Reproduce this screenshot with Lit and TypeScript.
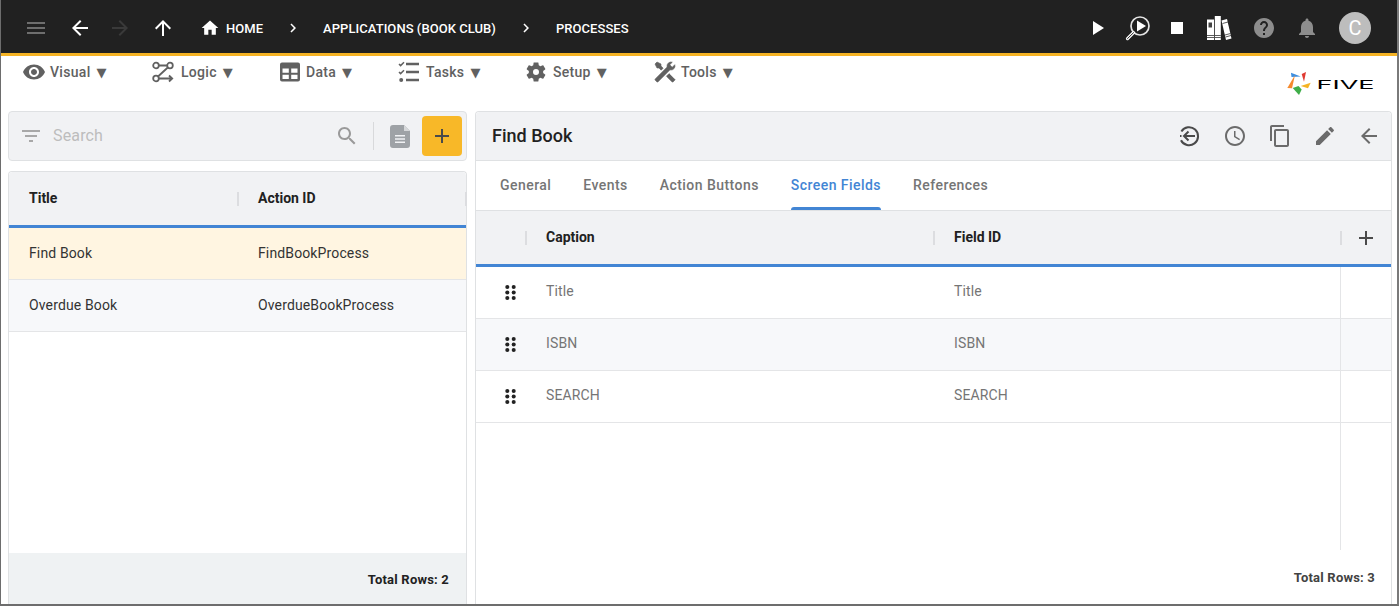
import { LitElement, html, css, svg } from 'lit';
import { customElement } from 'lit/decorators.js';

const P = {
  menu: 'M3 18h18v-2H3v2zm0-5h18v-2H3v2zm0-7v2h18V6H3z',
  back: 'M20 11H7.83l5.59-5.59L12 4l-8 8 8 8 1.41-1.41L7.83 13H20v-2z',
  forward: 'M12 4l-1.41 1.41L16.17 11H4v2h12.17l-5.58 5.59L12 20l8-8z',
  up: 'M4 12l1.41 1.41L11 7.83V20h2V7.83l5.58 5.59L20 12l-8-8-8 8z',
  home: 'M10 20v-6h4v6h5v-8h3L12 3 2 12h3v8z',
  chevron: 'M10 6L8.59 7.41 13.17 12l-4.58 4.59L10 18l6-6z',
  play: 'M8 5v14l11-7z',
  stop: 'M6 6h12v12H6z',
  help: 'M12 2C6.48 2 2 6.48 2 12s4.48 10 10 10 10-4.48 10-10S17.52 2 12 2zm1 17h-2v-2h2v2zm2.07-7.75l-.9.92C13.45 12.9 13 13.5 13 15h-2v-.5c0-1.1.45-2.1 1.17-2.83l1.24-1.26c.37-.36.59-.86.59-1.41 0-1.1-.9-2-2-2s-2 .9-2 2H8c0-2.21 1.79-4 4-4s4 1.79 4 4c0 .88-.36 1.68-.93 2.25z',
  bell: 'M12 22c1.1 0 2-.9 2-2h-4c0 1.1.89 2 2 2zm6-6v-5c0-3.07-1.64-5.64-4.5-6.32V4c0-.83-.67-1.5-1.5-1.5s-1.5.67-1.5 1.5v.68C7.63 5.36 6 7.92 6 11v5l-2 2v1h16v-1l-2-2z',
  eye: 'M12 4.5C7 4.5 2.73 7.61 1 12c1.73 4.39 6 7.5 11 7.5s9.27-3.11 11-7.5c-1.73-4.39-6-7.5-11-7.5zM12 17c-2.76 0-5-2.24-5-5s2.24-5 5-5 5 2.24 5 5-2.24 5-5 5zm0-8c-1.66 0-3 1.34-3 3s1.34 3 3 3 3-1.34 3-3-1.34-3-3-3z',
  gear: 'M19.14 12.94c.04-.3.06-.61.06-.94 0-.32-.02-.64-.07-.94l2.03-1.58c.18-.14.23-.41.12-.61l-1.92-3.32c-.12-.22-.37-.29-.59-.22l-2.39.96c-.5-.38-1.03-.7-1.62-.94l-.36-2.54c-.04-.24-.24-.41-.48-.41h-3.84c-.24 0-.43.17-.47.41l-.36 2.54c-.59.24-1.13.57-1.62.94l-2.39-.96c-.22-.08-.47 0-.59.22L2.74 8.87c-.12.21-.08.47.12.61l2.03 1.58c-.05.3-.09.63-.09.94s.02.64.07.94l-2.03 1.58c-.18.14-.23.41-.12.61l1.92 3.32c.12.22.37.29.59.22l2.39-.96c.5.38 1.03.7 1.62.94l.36 2.54c.05.24.24.41.48.41h3.84c.24 0 .44-.17.47-.41l.36-2.54c.59-.24 1.13-.56 1.62-.94l2.39.96c.22.08.47 0 .59-.22l1.92-3.32c.12-.22.07-.47-.12-.61l-2.01-1.58zM12 15a3 3 0 1 1 0-6 3 3 0 0 1 0 6z',
  tools: 'M21.71 20.29L20.29 21.71A1 1 0 0 1 18.88 21.71L7 9.85A3.81 3.81 0 0 1 6 10A4 4 0 0 1 2.22 4.7L4.76 7.24L5.29 6.71L6.71 5.29L7.24 4.76L4.7 2.22A4 4 0 0 1 10 6A3.81 3.81 0 0 1 9.85 7L21.71 18.88A1 1 0 0 1 21.71 20.29M2.29 18.88A1 1 0 0 0 2.29 20.29L3.71 21.71A1 1 0 0 0 5.12 21.71L10.59 16.25L7.76 13.42M20 2L16 4V6L13.83 8.17L15.83 10.17L18 8H20L22 4Z',
  filter: 'M10 18h4v-2h-4v2zM3 6v2h18V6H3zm3 7h12v-2H6v2z',
  search: 'M15.5 14h-.79l-.28-.27C15.41 12.59 16 11.11 16 9.5 16 5.91 13.09 3 9.5 3S3 5.91 3 9.5 5.91 16 9.5 16c1.61 0 3.09-.59 4.23-1.57l.27.28v.79l5 4.99L20.49 19l-4.99-5zm-6 0C7.01 14 5 11.99 5 9.5S7.01 5 9.5 5 14 7.01 14 9.5 11.99 14 9.5 14z',
  plus: 'M19 13h-6v6h-2v-6H5v-2h6V5h2v6h6v2z',
  clock: 'M11.99 2C6.47 2 2 6.48 2 12s4.47 10 9.99 10C17.52 22 22 17.52 22 12S17.52 2 11.99 2zM12 20c-4.42 0-8-3.58-8-8s3.58-8 8-8 8 3.58 8 8-3.58 8-8 8zm.5-13H11v6l5.25 3.15.75-1.23-4.5-2.67z',
  copy: 'M16 1H4c-1.1 0-2 .9-2 2v14h2V3h12V1zm3 4H8c-1.1 0-2 .9-2 2v14c0 1.1.9 2 2 2h11c1.1 0 2-.9 2-2V7c0-1.1-.9-2-2-2zm0 16H8V7h11v14z',
  edit: 'M3 17.25V21h3.75L17.81 9.94l-3.75-3.75L3 17.25zM20.71 7.04c.39-.39.39-1.02 0-1.41l-2.34-2.34c-.39-.39-1.02-.39-1.41 0l-1.83 1.83 3.75 3.75 1.83-1.83z',
};

const icon = (d: string, size = 24) =>
  html`<svg class="ic" width=${size} height=${size} viewBox="0 0 24 24" aria-hidden="true"><path d=${d} fill="currentColor"></path></svg>`;

const logicIcon = html`<svg class="ic" width="22" height="22" viewBox="0 0 22 22" fill="none" stroke="currentColor" stroke-width="1.800" aria-hidden="true">
  <circle cx="4" cy="4.500" r="2.800"></circle>
  <circle cx="18" cy="4.500" r="2.800"></circle>
  <circle cx="4" cy="17.500" r="2.800"></circle>
  <path d="M7 4.500h8M15.800 6.500 6 15.500M7 17.500h13M17 14.500l3.200 3-3.200 3"></path>
</svg>`;

const tableIcon = html`<svg class="ic" width="22" height="22" viewBox="0 0 22 22" aria-hidden="true">
  <path fill="currentColor" fill-rule="evenodd" d="M3 1.500h16a2 2 0 0 1 2 2v15a2 2 0 0 1-2 2H3a2 2 0 0 1-2-2v-15a2 2 0 0 1 2-2zM3.500 7.500v4.200h6.300V7.500zm8.700 0v4.200h6.300V7.500zM3.500 13.700v4.300h6.300v-4.300zm8.700 0v4.300h6.300v-4.300z"></path>
</svg>`;

const tasksIcon = html`<svg class="ic" width="22" height="22" viewBox="0 0 22 22" aria-hidden="true">
  <path d="M8 3h13M8 11h13M8 19h13" stroke="currentColor" stroke-width="2.300" fill="none"></path>
  <path d="M1 3l1.600 1.600L6 1.300M1 11l1.600 1.600L6 9.300" stroke="currentColor" stroke-width="1.500" fill="none"></path>
  <circle cx="3.200" cy="19" r="2" fill="currentColor"></circle>
</svg>`;

const toolsIcon = html`<svg class="ic" width="24" height="24" viewBox="0 0 24 24" aria-hidden="true">
  <path d=${P.tools} fill="currentColor" stroke="currentColor" stroke-width=".6" transform="translate(24 0) scale(-1 1)"></path>
</svg>`;

const docIcon = html`<svg class="ic" width="20" height="23" viewBox="0 0 20 23" aria-hidden="true">
  <path fill="currentColor" fill-rule="evenodd" d="M3 0h11l6 6v14a3 3 0 0 1-3 3H3a3 3 0 0 1-3-3V3a3 3 0 0 1 3-3zM5 10v1.500h10V10zm0 3.200v1.500h10v-1.500zm0 3.200v1.500h10v-1.500z"></path>
  <path d="M14 0v6h6z" fill="#d6d8da"></path>
</svg>`;

const magnifyPlay = html`<svg class="ic" width="26" height="26" viewBox="0 0 26 26" fill="none" aria-hidden="true">
  <circle cx="15" cy="11" r="9" stroke="#e4e4e4" stroke-width="1.700"></circle>
  <path d="M12 5.500l9 5.500-9 5.500z" fill="#fff"></path>
  <path d="M8.500 17.700 2.500 23.600" stroke="#fff" stroke-width="3.200" stroke-linecap="round"></path>
  <path d="M8.500 17.700 2.500 23.600" stroke="#212121" stroke-width="1" stroke-linecap="round"></path>
</svg>`;

const books = html`<svg class="ic" width="26" height="26" viewBox="0 0 26 26" aria-hidden="true">
  <path d="M1 4.500h7v20.500H1zM8.800 1h6v24h-6z" fill="#fff"></path>
  <path d="M15.500 5.500 21 4l4.500 19.500-5.500 1.500z" fill="#fff"></path>
  <path d="M2.500 7.500h3.500v5H2.500z" fill="#444"></path>
  <path d="M1 20.500h7M1 22.500h7M8.800 20.500h6M8.800 22.500h6M19 20l5.500-1.500M19.500 22l5.500-1.500M16.500 8.500l5.500-1.500" stroke="#333" stroke-width=".8"></path>
</svg>`;

const historyBack = html`<svg class="ic" width="24" height="24" viewBox="0 0 24 24" fill="none" stroke="currentColor" stroke-width="2" aria-hidden="true">
  <path d="M4.400 7.500A9 9 0 1 1 4 16.200"></path>
  <path d="M18 12H7M11.500 7.500 7 12l4.500 4.500"></path>
  <path d="M3 12h1.500"></path>
</svg>`;

const grip = html`<svg class="ic" width="11" height="17" viewBox="0 0 12 18" aria-hidden="true">
  ${[3, 9, 15].map((y) => svg`<circle cx="2.500" cy=${y} r="2.200" fill="#222"></circle><circle cx="9.500" cy=${y} r="2.200" fill="#222"></circle>`)}
</svg>`;

const logo = html`<svg class="logo" width="88" height="26" viewBox="0 0 88 26" role="img" aria-label="FIVE">
  <path d="M4 2.700 13.700 6.500 4.500 7z" fill="#3d8ee0"></path>
  <path d="M14.700 4 19 2 17 11.700z" fill="#e03a32"></path>
  <path d="M23.700 12.700 13.700 16 21 18.300z" fill="#f5b324"></path>
  <path d="M5.700 18 12 25 14.700 19.500 11.500 16z" fill="#3fae49"></path>
  <path d="M8 5 .3 18 5 18.300z" fill="#f58a2e"></path>
  <text x="29.500" y="18.500" font-family="Inter, sans-serif" font-size="11.500" font-weight="400" fill="#000" textLength="58" lengthAdjust="spacingAndGlyphs">FIVE</text>
</svg>`;

// label, icon, width of the whole item, gap between icon and label
const menuItems: [string, unknown, number, number][] = [
  ['Visual', icon(P.eye), 130, 4],
  ['Logic', logicIcon, 127, 7],
  ['Data', tableIcon, 119, 5],
  ['Tasks', tasksIcon, 126, 6],
  ['Setup', icon(P.gear), 129, 5],
  ['Tools', toolsIcon, 120, 4],
];

const leftRows = [
  ['Find Book', 'FindBookProcess'],
  ['Overdue Book', 'OverdueBookProcess'],
];
const fieldRows = ['Title', 'ISBN', 'SEARCH'];
const tabs = ['General', 'Events', 'Action Buttons', 'Screen Fields', 'References'];

@customElement('app-root')
export class AppRoot extends LitElement {
  static styles = css`
    :host {
      display: block;
      width: 1399px;
      height: 606px;
      box-sizing: border-box;
      position: relative;
      overflow: hidden;
      background: #fff;
      font-family: Roboto, 'Liberation Sans', sans-serif;
      font-size: 14px;
      color: #212121;
      border-left: 1px solid #6d6d6d;
      border-right: 2px solid #7a7a7a;
      border-bottom: 2px solid #6d6d6d;
    }
    .ic {
      display: block;
      flex: none;
    }
    .topbar {
      height: 50px;
      padding-top: 3px;
      background: #212121;
      border-bottom: 3px solid #f5b324;
      display: flex;
      align-items: center;
      color: #fff;
      padding-left: 23px;
    }
    .ham { color: #6e6e6e; }
    .back { margin-left: 20px; }
    .fwd { margin-left: 16px; color: #3a3a3a; }
    .upb { margin-left: 19px; }
    .home { margin-left: 25px; }
    .crumb {
      font-size: 13px;
      font-weight: 500;
      letter-spacing: 0.05px;
      white-space: nowrap;
    }
    .crumb.h { margin-left: 6px; }
    .chev { margin: 0 21px; }
    .spacer { flex: 1; }
    .tools {
      display: flex;
      align-items: center;
      padding-right: 26px;
    }
    .tools .grey { color: #8d8d8d; }
    .t-mag { margin-left: 16px; }
    .t-stop { margin-left: 14px; }
    .t-books { margin-left: 17px; }
    .t-help { margin-left: 20px; }
    .t-bell { margin-left: 19px; }
    .avatar {
      width: 32px;
      height: 32px;
      border-radius: 50%;
      background: #bdbdbd;
      color: #fff;
      font-size: 20px;
      display: flex;
      align-items: center;
      justify-content: center;
      margin-left: 20px;
    }
    .menu {
      height: 55px;
      display: flex;
      align-items: flex-start;
      padding: 4px 0 0 21px;
      box-sizing: border-box;
      position: relative;
    }
    .mi {
      display: flex;
      align-items: center;
      color: #616161;
      font-weight: 500;
      font-size: 14px;
      letter-spacing: 0.3px;
      height: 24px;
      flex: none;
    }
    .mi .arrow {
      font-family: 'DejaVu Sans', sans-serif;
      font-size: 13px;
      margin-left: 6px;
    }
    .logo {
      position: absolute;
      right: 22px;
      top: 14px;
    }
    .panes {
      display: flex;
      gap: 8px;
      padding: 0 5px 0 7px;
      height: 493px;
      align-items: stretch;
    }
    .left {
      width: 459px;
      display: flex;
      flex-direction: column;
      gap: 10px;
      flex: none;
    }
    .searchbar {
      height: 50px;
      box-sizing: border-box;
      background: #f1f2f4;
      border: 1px solid #dfe1e3;
      border-radius: 4px;
      display: flex;
      align-items: center;
      padding: 0 4px 0 10px;
      flex: none;
    }
    .searchbar .filter { color: #a8a8a8; }
    .placeholder {
      color: #bdbdbd;
      font-size: 16px;
      letter-spacing: 0.15px;
      margin: -1px 0 0 10px;
      flex: 1;
    }
    .searchbar .mag { color: #9a9a9a; margin-right: 14px; }
    .vsep { width: 1px; height: 28px; background: #d8d9db; margin-right: 16px; }
    .searchbar .doc { color: #9ea2a6; margin-right: 12px; }
    .add {
      width: 40px;
      height: 40px;
      border-radius: 4px;
      background: #f8b828;
      color: #4a4a4a;
      display: flex;
      align-items: center;
      justify-content: center;
    }
    .lt {
      flex: 1;
      display: flex;
      flex-direction: column;
      box-sizing: border-box;
      border: 1px solid #dfe1e3;
      border-bottom: none;
      border-radius: 4px 4px 0 0;
      min-height: 0;
    }
    .th {
      display: grid;
      background: #f1f2f4;
      border-bottom: 3px solid #4285d4;
      align-items: center;
      font-weight: 700;
      font-size: 14px;
      color: #212121;
      flex: none;
    }
    .lt .th { height: 53px; border-radius: 4px 4px 0 0; }
    .lt .th, .lt .tr { grid-template-columns: 229px 1fr; }
    .cell {
      padding-left: 20px;
      white-space: nowrap;
      letter-spacing: 0.13px;
    }
    .th .cell { position: relative; height: 16px; line-height: 14px; letter-spacing: 0; }
    .th .cell.sep::after {
      content: '';
      position: absolute;
      right: -1px;
      top: 1px;
      width: 2px;
      height: 14px;
      background: #dcdde0;
    }
    .tr {
      display: grid;
      height: 52px;
      box-sizing: border-box;
      align-items: center;
      border-bottom: 1px solid #e4e5e7;
      flex: none;
    }
    .lt .tr { color: #333; }
    .lt .tr .cell { padding-bottom: 2px; }
    .tr.sel { background: #fff5e1; }
    .tr.alt { background: #f7f8fa; }
    .grow { flex: 1; }
    .lfoot {
      height: 49px;
      padding: 2px 17px 0 0;
      background: #eff2f3;
      display: flex;
      align-items: center;
      justify-content: flex-end;
      font-size: 13px;
      letter-spacing: 0.2px;
      font-weight: 700;
      flex: none;
    }
    .right {
      flex: 1;
      min-width: 0;
      box-sizing: border-box;
      border: 1px solid #dfe1e3;
      border-bottom: none;
      border-radius: 4px 4px 0 0;
      display: flex;
      flex-direction: column;
    }
    .rhead {
      height: 48px;
      background: #f1f2f4;
      border-bottom: 1px solid #dfe1e3;
      border-radius: 4px 4px 0 0;
      display: flex;
      align-items: center;
      padding: 0 10px 0 16px;
      flex: none;
    }
    .rhead h1 {
      margin: 0 0 2px;
      flex: 1;
      font-size: 18px;
      font-weight: 500;
      color: #212121;
    }
    .rhead .acts {
      display: flex;
      align-items: center;
      gap: 21px;
      color: #6b6b6b;
    }
    .rhead .hist { color: #4a4a4a; }
    .rhead .nudge { transform: translateX(1px); }
    .tabs {
      height: 49px;
      display: flex;
      gap: 32px;
      padding-left: 24px;
      border-bottom: 1px solid #dfe1e3;
      flex: none;
    }
    .tab {
      position: relative;
      line-height: 48px;
      color: #757575;
      font-weight: 500;
      font-size: 14px;
      letter-spacing: 0.45px;
    }
    .tab.on { color: #4285d4; }
    .tab.on::after {
      content: '';
      position: absolute;
      left: 0;
      right: 0;
      bottom: 0;
      height: 3px;
      background: #4285d4;
      border-radius: 3px 3px 0 0;
    }
    .rt .th { height: 53px; }
    .rt .th, .rt .tr { grid-template-columns: 50px 408px 407px 1fr; }
    .rt .tr { color: #757575; }
    .rt .tr .cell { padding-bottom: 4px; }
    .rt .tr .last { height: 100%; border-left: 1px solid #e4e5e7; box-sizing: border-box; margin-left: -1px; }
    .rt .th .pl { display: flex; justify-content: center; color: #4a4a4a; }
    .gripc { display: flex; justify-content: flex-end; padding-right: 10px; }
    .rt { flex: 1; display: flex; flex-direction: column; min-height: 0; }
    .rt .fill { flex: 1; display: flex; justify-content: flex-end; padding-right: 50px; }
    .rt .fill i { width: 1px; background: #e4e5e7; display: block; }
    .rfoot {
      height: 53px;
      padding: 1px 16px 0 0;
      display: flex;
      align-items: center;
      justify-content: flex-end;
      font-size: 13px;
      letter-spacing: 0.2px;
      font-weight: 700;
      color: #424242;
      flex: none;
    }
  `;

  render() {
    return html`
      <div class="topbar">
        <span class="ham">${icon(P.menu)}</span>
        <span class="back">${icon(P.back)}</span>
        <span class="fwd">${icon(P.forward)}</span>
        <span class="upb">${icon(P.up)}</span>
        <span class="home">${icon(P.home, 20)}</span>
        <span class="crumb h">HOME</span>
        <span class="chev">${icon(P.chevron, 18)}</span>
        <span class="crumb">APPLICATIONS (BOOK CLUB)</span>
        <span class="chev">${icon(P.chevron, 18)}</span>
        <span class="crumb">PROCESSES</span>
        <span class="spacer"></span>
        <div class="tools">
          <span>${icon(P.play)}</span>
          <span class="t-mag">${magnifyPlay}</span>
          <span class="t-stop">${icon(P.stop)}</span>
          <span class="t-books">${books}</span>
          <span class="grey t-help">${icon(P.help)}</span>
          <span class="grey t-bell">${icon(P.bell)}</span>
          <span class="avatar">C</span>
        </div>
      </div>
      <div class="menu">
        ${menuItems.map(
          ([label, ic, width, gap]) => html`
            <div class="mi" style="width:${width}px">
              ${ic}<span style="margin-left:${gap}px">${label}</span><span class="arrow">▼</span>
            </div>
          `,
        )}
        ${logo}
      </div>
      <div class="panes">
        <div class="left">
          <div class="searchbar">
            <span class="filter">${icon(P.filter)}</span>
            <span class="placeholder">Search</span>
            <span class="mag">${icon(P.search)}</span>
            <span class="vsep"></span>
            <span class="doc">${docIcon}</span>
            <span class="add">${icon(P.plus)}</span>
          </div>
          <div class="lt">
            <div class="th">
              <div class="cell sep">Title</div>
              <div class="cell sep">Action ID</div>
            </div>
            ${leftRows.map(
              (r, i) => html`
                <div class="tr ${i === 0 ? 'sel' : 'alt'}">
                  <div class="cell">${r[0]}</div>
                  <div class="cell">${r[1]}</div>
                </div>
              `,
            )}
            <div class="grow"></div>
            <div class="lfoot">Total Rows: 2</div>
          </div>
        </div>
        <div class="right">
          <div class="rhead">
            <h1>Find Book</h1>
            <div class="acts">
              <span class="hist">${historyBack}</span>
              <span class="nudge">${icon(P.clock)}</span>
              <span class="nudge">${icon(P.copy)}</span>
              <span class="nudge">${icon(P.edit)}</span>
              <span>${icon(P.back)}</span>
            </div>
          </div>
          <div class="tabs">
            ${tabs.map((t) => html`<div class="tab ${t === 'Screen Fields' ? 'on' : ''}">${t}</div>`)}
          </div>
          <div class="rt">
            <div class="th">
              <div class="cell sep"></div>
              <div class="cell sep">Caption</div>
              <div class="cell sep">Field ID</div>
              <div class="pl">${icon(P.plus)}</div>
            </div>
            ${fieldRows.map(
              (f, i) => html`
                <div class="tr ${i === 1 ? 'alt' : ''}">
                  <div class="gripc">${grip}</div>
                  <div class="cell">${f}</div>
                  <div class="cell">${f}</div>
                  <div class="last"></div>
                </div>
              `,
            )}
            <div class="fill"><i></i></div>
            <div class="rfoot">Total Rows: 3</div>
          </div>
        </div>
      </div>
    `;
  }
}
